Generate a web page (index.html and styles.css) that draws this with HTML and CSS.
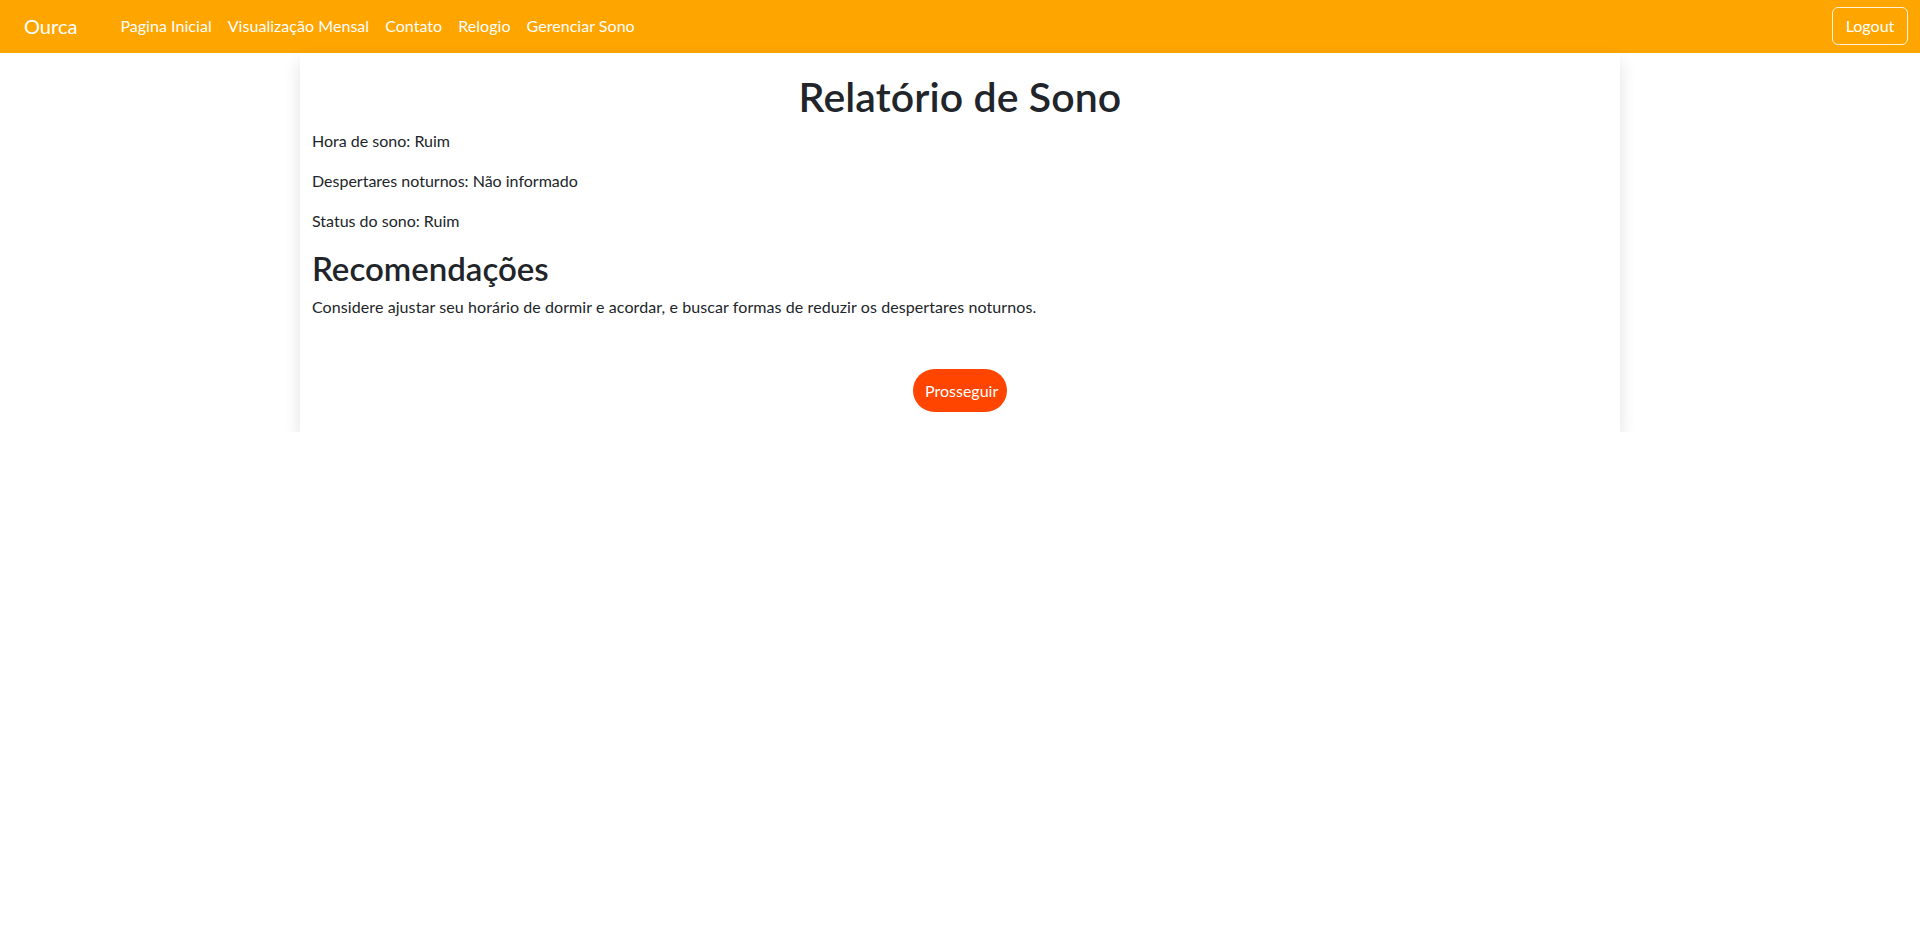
FILE: index.html
```html
<!DOCTYPE html>
<html lang="pt-BR">
<head>
<meta charset="utf-8">
<title>Relatório de Sono</title>
<link rel="stylesheet" href="styles.css">
</head>
<body>
<nav class="navbar">
  <a class="brand" href="#">Ourca</a>
  <ul class="nav-links">
    <li><a href="#">Pagina Inicial</a></li>
    <li><a href="#">Visualização Mensal</a></li>
    <li><a href="#">Contato</a></li>
    <li><a href="#">Relogio</a></li>
    <li><a href="#">Gerenciar Sono</a></li>
  </ul>
  <button class="btn-logout" type="button">Logout</button>
</nav>
<main class="card">
  <h1 class="title">Relatório de Sono</h1>
  <p>Hora de sono: Ruim</p>
  <p>Despertares noturnos: Não informado</p>
  <p>Status do sono: Ruim</p>
  <h2 class="subtitle">Recomendações</h2>
  <p class="rec">Considere ajustar seu horário de dormir e acordar, e buscar formas de reduzir os despertares noturnos.</p>
  <div class="actions">
    <button class="btn-next" type="button">Prosseguir</button>
  </div>
</main>
</body>
</html>
```
FILE: styles.css
```css
* { box-sizing: border-box; }
body {
  margin: 0;
  font-family: Lato, "Liberation Sans", sans-serif;
  font-size: 16px;
  line-height: 24px;
  color: #212529;
  background: #fff;
}
.navbar {
  display: flex;
  align-items: center;
  height: 53px;
  padding: 6px 12px 7px 24px;
  background: #ffa500;
}
.brand {
  color: #fff;
  text-decoration: none;
  font-size: 20px;
  line-height: 30px;
  padding: 5px 0;
}
.nav-links {
  display: flex;
  list-style: none;
  margin: 0 0 0 35px;
  padding: 0;
  flex: 1;
}
.nav-links a {
  display: block;
  padding: 8px;
  color: #fff;
  text-decoration: none;
  letter-spacing: 0.04px;
}
.btn-logout {
  font: inherit;
  color: #fff;
  background: transparent;
  border: 1px solid rgba(255, 255, 255, 0.85);
  border-radius: 6px;
  padding: 6px 12px;
  line-height: 24px;
  width: 76px;
}
.card {
  width: 1320px;
  margin: 0 auto;
  padding: 19px 12px 20px 12px;
  background: #fff;
  box-shadow: 0 8px 16px rgba(0, 0, 0, 0.12);
}
.title {
  margin: 0 0 8px;
  text-align: center;
  font-size: 41px;
  line-height: 1.2;
  font-weight: 600;
  letter-spacing: 0.1px;
}
.subtitle {
  margin: 0 0 8px;
  font-size: 33px;
  line-height: 38px;
  font-weight: 600;
}
p { margin: 0 0 16px; }
.rec { letter-spacing: 0.09px; }
.actions {
  display: flex;
  justify-content: center;
  padding-top: 34px;
}
.btn-next {
  font: inherit;
  line-height: 24px;
  color: #fff;
  background: #ff4500;
  border: 0;
  border-radius: 22px;
  height: 43px;
  width: 94px;
  padding: 0 12px;
}
```
